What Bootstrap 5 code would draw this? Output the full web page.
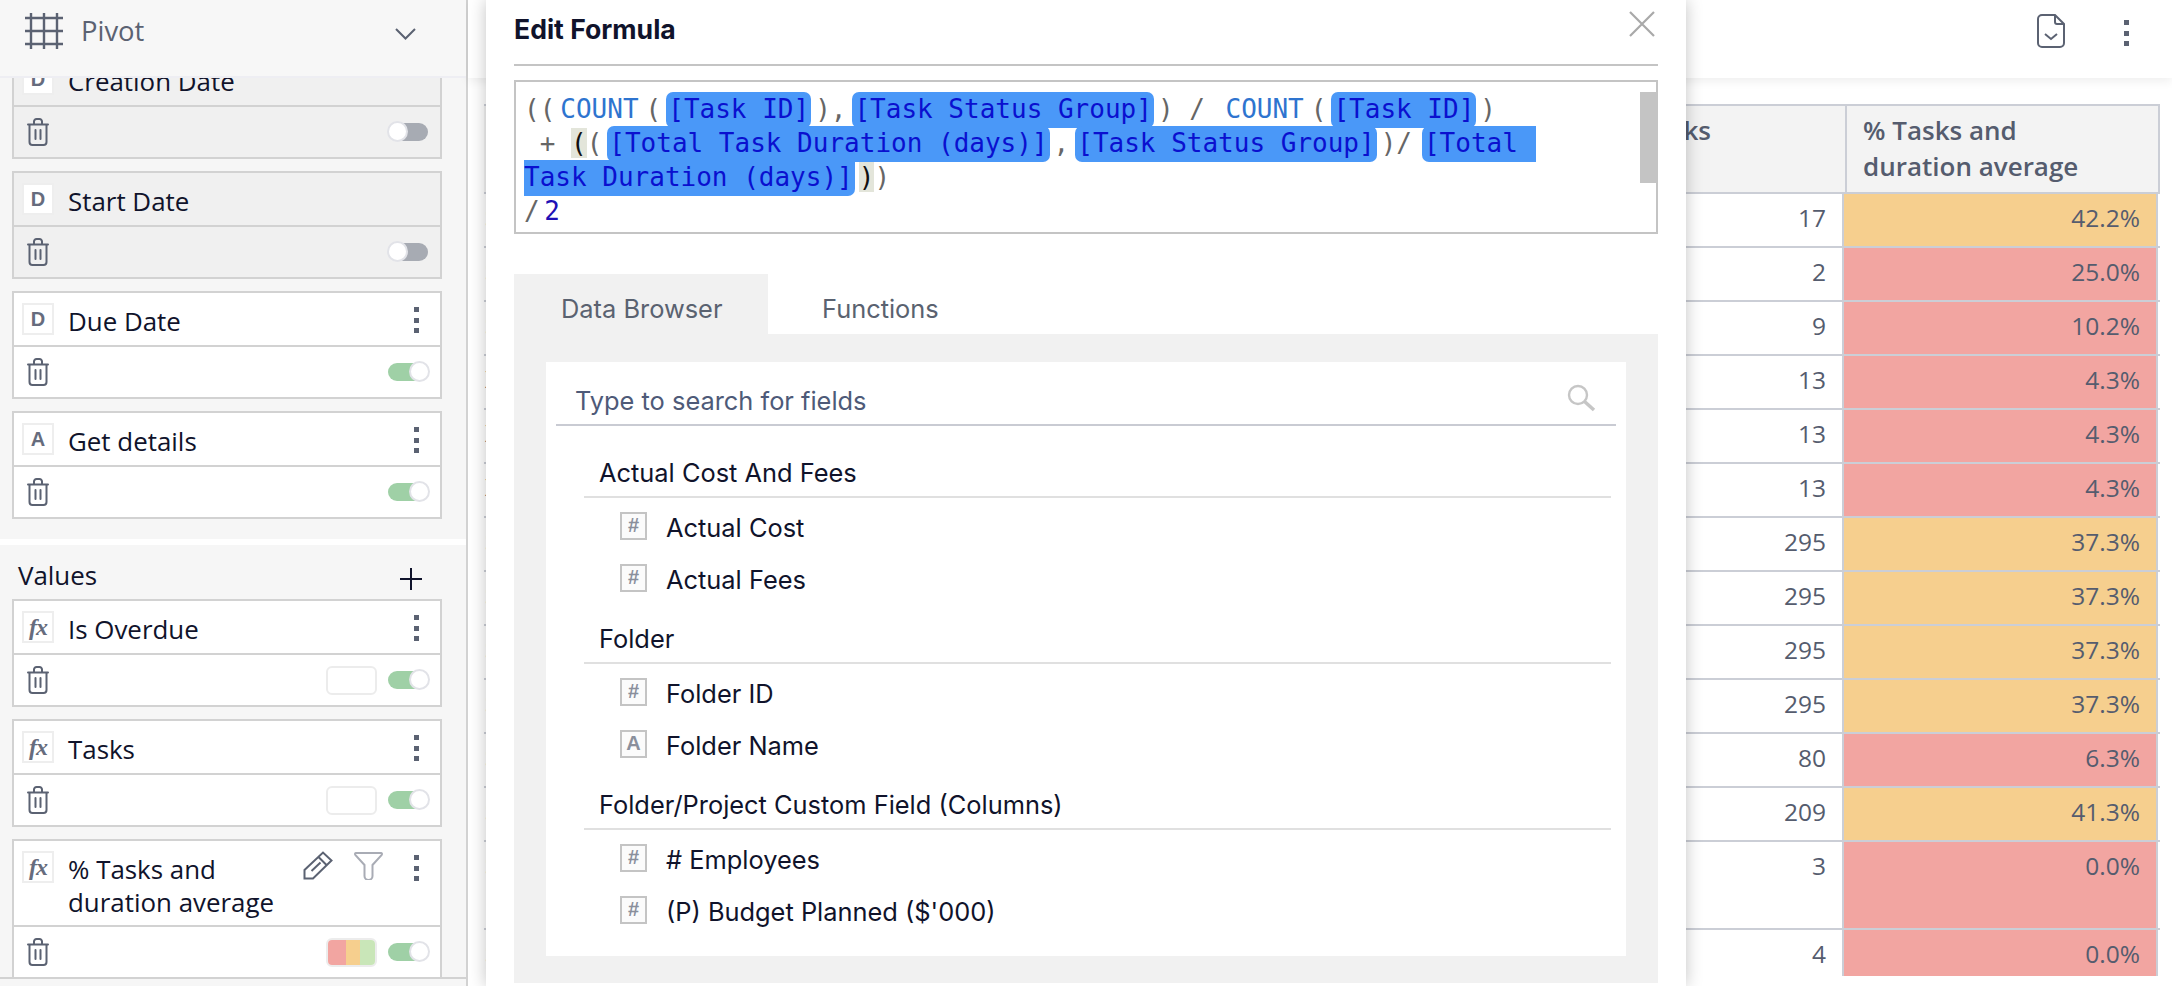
<!DOCTYPE html>
<html lang="en">
<head>
<meta charset="utf-8">
<title>Edit Formula</title>
<link href="https://cdn.jsdelivr.net/npm/bootstrap@5.3.0/dist/css/bootstrap.min.css" rel="stylesheet">
<style>
html,body{margin:0;height:986px;overflow:hidden;background:#fff}
body{font-family:"Open Sans","Noto Sans",sans-serif;color:#10132b}
.shell{width:2172px;height:986px;position:relative}
/* sidebar */
.side{width:468px;height:986px;flex:none;background:#f6f6f6;border-right:2px solid #d2d2d2}
.side-head{height:78px;background:#f7f7f7;border-bottom:2px solid #eeeef3;padding:12px 50px 0 25px;position:relative;z-index:2;color:#5b6272;font-size:27.4px}
.side-head span{margin-left:18px;line-height:38px}
.side-body{height:899px;overflow:hidden}
.side-inner{margin-top:-27px}
.fbox{width:430px;margin:0 0 12px 12px;border:2px solid #d2d2d2;background:#fff}
.fbox.off{background:#f0f0f0}
.ftop{min-height:54px;padding:10px 21px 6px 8px;border-bottom:2px solid #d2d2d2}
.ftitle{font-size:25.9px;line-height:33px;margin:2px 0 0 14px;flex:1;color:#10132b}
.tbox{width:32px;height:32px;flex:none;background:#fff;border:2px solid #eeeeee;color:#666c7d;font-weight:700;font-size:20px;line-height:28px;text-align:center;font-family:"Liberation Sans",sans-serif}
.tbox i{font-family:"Liberation Serif",serif;font-size:24px;letter-spacing:-1px}
.dots{display:flex;flex-direction:column;gap:5.5px;margin-top:4px;width:5px;flex:none}
.mhead .dots{margin-top:6px}
.dots b{display:block;width:5px;height:5px;background:#5b6272}
.fbot{height:50px;padding:0 11px 0 13px}
.trash{width:22px;height:28px;color:#5b6272;flex:none}
.tgl{width:41px;height:20px;position:relative;flex:none;margin-left:11px}
.tgl::before{content:"";position:absolute;left:4px;top:1px;width:37px;height:18px;border-radius:9px;background:#a7abb3}
.tgl::after{content:"";position:absolute;left:0;top:-1px;width:21px;height:21px;border-radius:50%;background:#fff;border:2px solid #e2e3e8}
.tgl.on::before{left:0;background:#9fd0a6}
.tgl.on::after{left:21px}
.tgl:not(.on){margin-right:1px}
.swatch{width:51px;height:29px;border:2px solid #ececec;border-radius:6px;background:#fff;overflow:hidden;flex:none}
.swatch u{display:block;height:100%}
.s-r{width:18px;background:#f2a5a1}.s-o{width:14px;background:#f6cf8e}.s-g{flex:1;background:#c9e6b8}
.band{height:6px;background:#fff;margin-top:20px}
.vhead{height:54px;padding:11px 44px 0 18px;font-size:25.9px;color:#10132b}
.plus{margin-top:12px}
.ic-pen{margin-right:21px}
.ic-fun{margin-right:31px}
.side-foot{border-top:2px solid #d2d2d2;height:9px;margin-top:0;position:relative;z-index:2;background:#f6f6f6}
/* main */
.mainbox{flex:1;min-width:0;height:986px}
.mhead{height:78px;background:#fff;box-shadow:0 3px 10px rgba(0,0,0,.07);padding:14px 43px 0 0;position:relative}
.ic-file{margin-right:59px}
.grid-wrap{margin:26px 0 0 16px;width:1676px;height:872px;overflow:hidden;color:#555c6e;font-size:24.5px;border-top:2px solid #cbced6}
.hrow{height:88px;border-bottom:2px solid #cbced6;background:#f3f3f3;font-weight:600;line-height:36px;font-size:26px}
.hc1{width:1147px;flex:none}
.hc2{width:214px;flex:none;padding:6px 0 0 10px}
.hc3{width:315px;flex:none;border-left:2px solid #cbced6;border-right:2px solid #cbced6;padding:6px 0 0 16px}
.drow{height:54px;border-bottom:2px solid #cbced6;line-height:33px}
.drow.tall{height:88px}
.dc1{width:1147px;flex:none;padding:6px 0 0 1px;overflow:hidden}
.dc2{width:211px;flex:none;text-align:right;padding:7px 16px 0 0}
.dc3{width:316px;flex:none;text-align:right;padding:7px 16px 0 0;border-left:2px solid #cbced6;border-right:2px solid #cbced6}
.amber{background:#f6cf8e}.rose{background:#f2a5a1}
/* modal */
.fmodal{position:absolute;left:486px;top:0;width:1200px;height:986px;background:#fff;box-shadow:0 0 16px rgba(0,0,0,.24);z-index:5;font-family:Inter,"Noto Sans",sans-serif;padding:0 28px 0 28px}
.mtitle{height:66px;border-bottom:2px solid #c4c4c4;padding-top:13px;font-weight:700;font-size:26.6px;line-height:32px;color:#10132b;position:relative}
.xbtn{position:absolute;right:3px;top:11px;width:26px;height:26px;color:#a9a9a9}
.editor{height:154px;margin-top:14px;border:2px solid #c4c4c4;padding:10px 0 0 8px;position:relative;font-family:"DejaVu Sans Mono","Liberation Mono",monospace;font-size:26px;color:#666;overflow:hidden}
.eline{height:34px;line-height:34px;white-space:pre;display:flex}
.sb{position:absolute;right:0;top:10px;width:16px;height:91px;background:#c4c4c4}
.fn{color:#2e74cf;margin:0 7px 0 5px}
.hl{background:#4a98f8;color:#0a10cf;border-radius:7px;padding:0 2px;height:36px;line-height:34px;margin:0 4px 0 5px}
.hl.wide{margin-left:6px}
.hl.tail{border-radius:7px 0 0 7px;margin:0 0 0 10px}
.hl.head{border-radius:0 0 7px 0;margin:0;padding-left:0}
.pale{background:#e3e5da;color:#111;height:30px;line-height:30px;margin-top:2px}
.num{color:#1e10b5;margin-left:-11px}
.tabsbar{margin-top:40px;height:60px}
.tabx{height:60px;line-height:70px;padding:0 0 0 47px;font-size:25.4px;color:#5a6270;white-space:nowrap}
.tabx.act{background:#f1f1f1;width:254px}
.tabx.oth{padding-left:54px}
.panel{background:#f1f1f1;height:649px;padding:28px 32px 0 32px}
.browser{background:#fff;height:594px;padding:0 10px}
.searchrow{height:64px;border-bottom:2px solid #c9cbd3;padding:24px 20px 0 19px;color:#4e5a78;font-size:25.4px;line-height:30px}
.searchrow svg{width:30px;height:28px;color:#c6c6c6;margin-top:-2px}
.groupt{margin:13px 5px 0 28px;height:49px;border-bottom:2px solid #e0e0e0;padding:9px 0 0 15px;font-size:25.4px;line-height:30px;color:#10132b}
.groupt.first{margin-top:23px}
.fitem{height:52px;padding:15px 0 0 64px;font-size:25.4px;line-height:30px;color:#10132b}
.sq{width:27px;height:28px;flex:none;border:2px solid #c4c4c4;background:#fbfbfb;color:#8a8f9c;font-size:20px;font-weight:700;line-height:23px;text-align:center;margin:-1px 19px 0 0;font-family:"Liberation Sans",sans-serif}
</style>
</head>
<body>
<svg width="0" height="0" class="d-none">
<symbol id="trash" viewBox="0 0 22 28"><g fill="none" stroke="currentColor" stroke-width="2" stroke-linecap="round"><path d="M1 6.5H21M7 6V3.5A2.5 2.5 0 0 1 9.500 1h3A2.500 2.500 0 0 1 15 3.500V6M2.500 6.500V24a3 3 0 0 0 3 3h11a3 3 0 0 0 3-3V6.500M8.500 12v9M13.500 12v9"/></g></symbol>
</svg>
<div class="shell d-flex">
  <aside class="side d-flex flex-column">
    <div class="side-head d-flex align-items-start">
      <svg width="38" height="38" viewBox="0 0 38 38" fill="none" stroke="currentColor" stroke-width="2.400"><path d="M6 1v36M19 1v36M32 1v36M0 6h38M0 19h38M0 32h38"/></svg>
      <span class="flex-grow-1">Pivot</span>
      <svg class="mt-3" width="21" height="12" viewBox="0 0 21 12" fill="none" stroke="currentColor" stroke-width="2"><path d="M1 1l9.500 9.500L20 1"/></svg>
    </div>
    <div class="side-body">
      <div class="side-inner">
        <div class="fbox off"><div class="ftop d-flex"><div class="tbox">D</div><div class="ftitle">Creation Date</div></div><div class="fbot d-flex align-items-center justify-content-between"><svg class="trash"><use href="#trash"/></svg><div class="tgl"></div></div></div>
        <div class="fbox off"><div class="ftop d-flex"><div class="tbox">D</div><div class="ftitle">Start Date</div></div><div class="fbot d-flex align-items-center justify-content-between"><svg class="trash"><use href="#trash"/></svg><div class="tgl"></div></div></div>
        <div class="fbox"><div class="ftop d-flex"><div class="tbox">D</div><div class="ftitle">Due Date</div><div class="dots"><b></b><b></b><b></b></div></div><div class="fbot d-flex align-items-center justify-content-between"><svg class="trash"><use href="#trash"/></svg><div class="tgl on"></div></div></div>
        <div class="fbox"><div class="ftop d-flex"><div class="tbox">A</div><div class="ftitle">Get details</div><div class="dots"><b></b><b></b><b></b></div></div><div class="fbot d-flex align-items-center justify-content-between"><svg class="trash"><use href="#trash"/></svg><div class="tgl on"></div></div></div>
        <div class="band"></div>
        <div class="vhead d-flex justify-content-between align-items-start"><span>Values</span><svg class="plus" width="22" height="22" viewBox="0 0 22 22" stroke="currentColor" stroke-width="2"><path d="M11 0v22M0 11h22"/></svg></div>
        <div class="fbox"><div class="ftop d-flex"><div class="tbox"><i>fx</i></div><div class="ftitle">Is Overdue</div><div class="dots"><b></b><b></b><b></b></div></div><div class="fbot d-flex align-items-center"><svg class="trash me-auto"><use href="#trash"/></svg><div class="swatch"></div><div class="tgl on"></div></div></div>
        <div class="fbox"><div class="ftop d-flex"><div class="tbox"><i>fx</i></div><div class="ftitle">Tasks</div><div class="dots"><b></b><b></b><b></b></div></div><div class="fbot d-flex align-items-center"><svg class="trash me-auto"><use href="#trash"/></svg><div class="swatch"></div><div class="tgl on"></div></div></div>
        <div class="fbox"><div class="ftop d-flex"><div class="tbox"><i>fx</i></div><div class="ftitle">% Tasks and<br>duration average</div>
          <svg class="ic-pen" width="30" height="29" viewBox="0 0 30 29" fill="none" stroke="#5b6272" stroke-width="2"><path d="M1.500 27.500V19L20 1.500l8.500 8L10 27.500zM15.500 6l8.500 8.500M8.500 20l9-8.500"/></svg>
          <svg class="ic-fun" width="29" height="29" viewBox="0 0 29 29" fill="none" stroke="#a9acb5" stroke-width="2"><path d="M2 2h25c1 0 1.200 1 .7 1.800L18.500 14v11a4 4 0 0 1-8 0V14L1.300 3.800C.8 3 1 2 2 2z"/></svg>
          <div class="dots"><b></b><b></b><b></b></div></div><div class="fbot d-flex align-items-center"><svg class="trash me-auto"><use href="#trash"/></svg><div class="swatch d-flex"><u class="s-r"></u><u class="s-o"></u><u class="s-g"></u></div><div class="tgl on"></div></div></div>
      </div>
    </div>
    <div class="side-foot"></div>
  </aside>
  <main class="mainbox d-flex flex-column">
    <div class="mhead d-flex justify-content-end align-items-start">
      <svg class="ic-file" width="28" height="34" viewBox="0 0 28 34" fill="none" stroke="#5b6272" stroke-width="2"><path d="M18 1H5a4 4 0 0 0-4 4v24a4 4 0 0 0 4 4h18a4 4 0 0 0 4-4V10zM18 1v7a2 2 0 0 0 2 2h7M8 20l6 5 6-5"/></svg>
      <div class="dots"><b></b><b></b><b></b></div>
    </div>
    <div class="grid-wrap">
      <div class="hrow d-flex"><div class="hc1"></div><div class="hc2">Tasks</div><div class="hc3">% Tasks and<br>duration average</div></div>
      <div class="drow d-flex"><div class="dc1">S</div><div class="dc2">17</div><div class="dc3 amber">42.2%</div></div>
      <div class="drow d-flex"><div class="dc1">S</div><div class="dc2">2</div><div class="dc3 rose">25.0%</div></div>
      <div class="drow d-flex"><div class="dc1">S</div><div class="dc2">9</div><div class="dc3 rose">10.2%</div></div>
      <div class="drow d-flex"><div class="dc1">X</div><div class="dc2">13</div><div class="dc3 rose">4.3%</div></div>
      <div class="drow d-flex"><div class="dc1">X</div><div class="dc2">13</div><div class="dc3 rose">4.3%</div></div>
      <div class="drow d-flex"><div class="dc1">X</div><div class="dc2">13</div><div class="dc3 rose">4.3%</div></div>
      <div class="drow d-flex"><div class="dc1">S</div><div class="dc2">295</div><div class="dc3 amber">37.3%</div></div>
      <div class="drow d-flex"><div class="dc1">S</div><div class="dc2">295</div><div class="dc3 amber">37.3%</div></div>
      <div class="drow d-flex"><div class="dc1">S</div><div class="dc2">295</div><div class="dc3 amber">37.3%</div></div>
      <div class="drow d-flex"><div class="dc1">S</div><div class="dc2">295</div><div class="dc3 amber">37.3%</div></div>
      <div class="drow d-flex"><div class="dc1">S</div><div class="dc2">80</div><div class="dc3 rose">6.3%</div></div>
      <div class="drow d-flex"><div class="dc1">S</div><div class="dc2">209</div><div class="dc3 amber">41.3%</div></div>
      <div class="drow tall d-flex"><div class="dc1">S</div><div class="dc2">3</div><div class="dc3 rose">0.0%</div></div>
      <div class="drow d-flex"><div class="dc1">S</div><div class="dc2">4</div><div class="dc3 rose">0.0%</div></div>
    </div>
  </main>
  <section class="fmodal">
    <div class="mtitle">Edit Formula
      <svg class="xbtn" viewBox="0 0 26 26" fill="none" stroke="currentColor" stroke-width="2.200"><path d="M1 1l24 24M25 1L1 25"/></svg>
    </div>
    <div class="editor">
      <div class="eline"><span>((</span><span class="fn">COUNT</span><span>(</span><span class="hl">[Task ID]</span><span>),</span><span class="hl wide">[Task Status Group]</span><span>) / </span><span class="fn">COUNT</span><span>(</span><span class="hl">[Task ID]</span><span>)</span></div>
      <div class="eline"><span> + </span><span class="pale">(</span><span>(</span><span class="hl">[Total Task Duration (days)]</span><span>,</span><span class="hl wide">[Task Status Group]</span><span>)/</span><span class="hl tail">[Total </span></div>
      <div class="eline"><span class="hl head">Task Duration (days)]</span><span class="pale ms-1">)</span><span>)</span></div>
      <div class="eline"><span>/ </span><span class="num">2</span></div>
      <div class="sb"></div>
    </div>
    <div class="tabsbar d-flex">
      <div class="tabx act">Data Browser</div>
      <div class="tabx oth">Functions</div>
    </div>
    <div class="panel">
      <div class="browser">
        <div class="searchrow d-flex justify-content-between align-items-start"><span>Type to search for fields</span>
          <svg viewBox="0 0 30 28" fill="none" stroke="currentColor" stroke-width="2.400"><circle cx="12" cy="11" r="9"/><path d="M18.500 17.500L28 26" stroke-width="3.500"/></svg></div>
        <div class="groupt first">Actual Cost And Fees</div>
        <div class="fitem d-flex align-items-start"><div class="sq">#</div>Actual Cost</div>
        <div class="fitem d-flex align-items-start"><div class="sq">#</div>Actual Fees</div>
        <div class="groupt">Folder</div>
        <div class="fitem d-flex align-items-start"><div class="sq">#</div>Folder ID</div>
        <div class="fitem d-flex align-items-start"><div class="sq">A</div>Folder Name</div>
        <div class="groupt">Folder/Project Custom Field (Columns)</div>
        <div class="fitem d-flex align-items-start"><div class="sq">#</div># Employees</div>
        <div class="fitem d-flex align-items-start"><div class="sq">#</div>(P) Budget Planned ($'000)</div>
      </div>
    </div>
  </section>
</div>
<script src="https://cdn.jsdelivr.net/npm/bootstrap@5.3.0/dist/js/bootstrap.bundle.min.js"></script>
</body>
</html>
